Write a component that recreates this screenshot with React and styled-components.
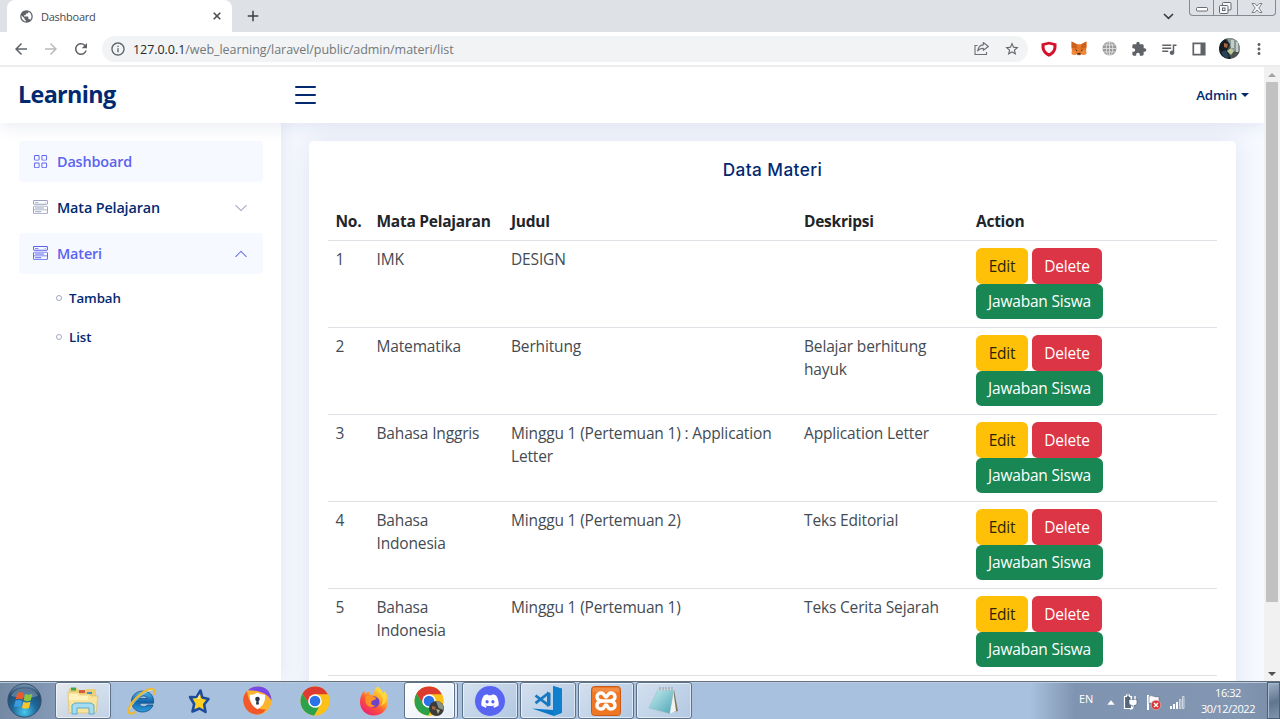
import React from "react";
import styled, { createGlobalStyle, css } from "styled-components";
import {
  MdArrowBack, MdArrowForward, MdRefresh, MdInfoOutline, MdPublic, MdAdd,
  MdStarBorder, MdExtension, MdQueueMusic, MdMoreVert,
} from "react-icons/md";
import { BsGrid, BsMenuButtonWide, BsChevronDown, BsChevronUp } from "react-icons/bs";
import { FaDiscord } from "react-icons/fa";

const GlobalStyle = createGlobalStyle`
  * { box-sizing: border-box; }
  body { margin: 0; overflow: hidden; font-family: "Open Sans", "Noto Sans", sans-serif; }
  svg { display: block; flex: none; }
`;

const Screen = styled.div`
  width: 1280px;
  height: 719px;
  display: flex;
  flex-direction: column;
  overflow: hidden;
  background: #fff;
`;

/* ---------- browser ---------- */

const TabStrip = styled.div`
  height: 32px;
  flex: none;
  display: flex;
  align-items: stretch;
  background: #dee1e6;
  padding-left: 7px;
`;

const Tab = styled.div`
  width: 225px;
  display: flex;
  align-items: center;
  padding: 0 11px 0 12px;
  gap: 7px;
  background: #fff;
  border-radius: 8px 8px 0 0;
  color: #5f6368;
`;

const TabTitle = styled.span`
  flex: 1;
  font-size: 11px;
  letter-spacing: -0.25px;
  color: #45494d;
`;

const NewTab = styled.div`
  display: flex;
  align-items: center;
  padding-left: 12px;
  color: #3c4043;
  flex: 1;
`;

const TabSearch = styled.div`
  display: flex;
  align-items: center;
  margin-right: 15px;
  color: #3c4043;
`;

const WindowButtons = styled.div`
  display: flex;
  width: 87px;
  height: 16px;
  margin-right: 4px;
  border: 1px solid #858a91;
  border-top: 0;
  border-radius: 0 0 4px 4px;
`;

const WindowButton = styled.div`
  width: ${(p) => p.$w}px;
  display: flex;
  align-items: center;
  justify-content: center;
  padding-top: ${(p) => p.$drop || 0}px;
  border-left: ${(p) => (p.$first ? "0" : "1px solid #858a91")};
`;

const Toolbar = styled.div`
  height: 35px;
  flex: none;
  display: flex;
  align-items: center;
  padding: 0 6px 0 12px;
  border-bottom: 2px solid #ebecee;
  color: #5f6368;
`;

const NavButtons = styled.div`
  display: flex;
  gap: 12px;
  width: 90px;
`;

const AddressBar = styled.div`
  flex: 1;
  height: 26px;
  border-radius: 13px;
  background: #f1f3f4;
  display: flex;
  align-items: center;
  padding: 0 8px;
`;

const Url = styled.span`
  flex: 1;
  margin-left: 7px;
  padding-top: 1px;
  font-size: 12.5px;
  letter-spacing: -0.05px;
  color: #74787c;
  span { color: #27292c; }
`;

const AddressActions = styled.div`
  display: flex;
  gap: 14px;
`;

const Extensions = styled.div`
  display: grid;
  grid-template-columns: repeat(8, 30px);
  place-items: center;
  margin-left: 6px;
`;

const Viewport = styled.div`
  height: 614px;
  flex: none;
  display: flex;
  overflow: hidden;
`;

const Scrollbar = styled.div`
  width: 16px;
  display: flex;
  flex-direction: column;
  align-items: center;
  justify-content: space-between;
  background: #f1f1f1;
  padding: 6px 0 5px;
`;

const Thumb = styled.div`
  width: 12px;
  height: 520px;
  margin: 0 0 auto;
  background: #c1c1c1;
`;

const ScrollArrow = styled.div`
  border: 4px solid transparent;
  ${(p) => p.$up
    ? css`border-top: 0; border-bottom-color: #a3a3a3; margin-bottom: 5px;`
    : css`border-bottom: 0; border-top-color: #505050;`}
`;

/* ---------- page ---------- */

const Page = styled.div`
  flex: 1;
  display: flex;
  flex-direction: column;
  background: #f6f9ff;
  overflow: hidden;
`;

const Header = styled.header`
  position: relative;
  z-index: 2;
  height: 56px;
  flex: none;
  display: flex;
  align-items: center;
  padding: 0 15px 0 18px;
  background: #fff;
  box-shadow: 0 2px 19px rgba(1, 41, 112, 0.1);
  color: #012970;
`;

const Brand = styled.div`
  width: 277px;
  padding-bottom: 2px;
  font: 700 23.4px/30px "Open Sans", sans-serif;
  letter-spacing: -0.68px;
`;

const Burger = styled.div`
  width: 21px;
  height: 18px;
  margin-bottom: 1px;
  display: flex;
  flex-direction: column;
  justify-content: space-between;
  span { height: 2px; border-radius: 1px; background: #012970; }
`;

const Account = styled.div`
  margin-left: auto;
  display: flex;
  align-items: center;
  gap: 4px;
  font-size: 13.3px;
  letter-spacing: -0.25px;
  font-weight: 600;
`;

const Caret = styled.i`
  border: 4px solid transparent;
  border-bottom: 0;
  border-top-color: #012970;
`;

const Body = styled.div`
  flex: 1;
  display: flex;
  min-height: 0;
`;

const Sidebar = styled.aside`
  width: 281px;
  flex: none;
  padding: 18px 18px 0 19px;
  background: #fff;
  box-shadow: 0 0 19px rgba(1, 41, 112, 0.1);
`;

const NavItem = styled.div`
  height: 41px;
  margin-bottom: 5px;
  display: flex;
  align-items: center;
  padding: 0 15px 0 14px;
  border-radius: 4px;
  font-size: 14.4px;
  letter-spacing: -0.14px;
  font-weight: 600;
  color: ${(p) => (p.$active ? "#5b62f0" : "#012970")};
  background: ${(p) => (p.$active ? "#f6f9ff" : "#fff")};
  & > svg { color: ${(p) => (p.$active ? "#5b62f0" : "#98a2c0")}; }
`;

const NavLabel = styled.span`
  flex: 1;
  margin-left: 9px;
`;

const SubItem = styled.div`
  height: 38.4px;
  display: flex;
  align-items: center;
  padding-left: 37px;
  gap: 7px;
  font-size: 13.3px;
  letter-spacing: -0.08px;
  font-weight: 600;
  color: #012970;
`;

const Bullet = styled.i`
  width: 6px;
  height: 6px;
  border: 1px solid #a0a9c4;
  border-radius: 50%;
`;

const Main = styled.main`
  flex: 1;
  padding: 18px 28px 0;
`;

const Card = styled.section`
  height: 620px;
  padding: 0 19px;
  background: #fff;
  border-radius: 5px;
  box-shadow: 0 0 28px rgba(1, 41, 112, 0.1);
`;

const CardTitle = styled.h5`
  margin: 0;
  padding: 19px 0 19px;
  text-align: center;
  font: 450 17.2px/20px Inter, sans-serif;
  letter-spacing: 0.42px;
  color: #012970;
`;

const Table = styled.table`
  width: 889px;
  table-layout: fixed;
  border-collapse: collapse;
  font-size: 15.5px;
  letter-spacing: -0.16px;
  line-height: 22.5px;
  color: #444b52;
`;

const Th = styled.th`
  width: ${(p) => p.$w}px;
  height: 41px;
  padding: 3px 7.5px 0;
  text-align: left;
  font-weight: 700;
  letter-spacing: -0.26px;
  color: #212529;
  border-bottom: 1px solid #dee2e6;
`;

const Td = styled.td`
  height: 87px;
  padding: 7.5px 7.5px 7px;
  vertical-align: top;
  border-bottom: 1px solid #dee2e6;
`;

const Actions = styled.div`
  width: 150px;
  display: flex;
  flex-wrap: wrap;
  column-gap: 4px;
`;

const tones = {
  warning: { bg: "#ffc107", fg: "#2b2406", w: 52 },
  danger: { bg: "#dc3545", fg: "#fff", w: 70 },
  success: { bg: "#198754", fg: "#fff", w: 127 },
};

const Button = styled.button`
  width: ${(p) => tones[p.$tone].w}px;
  height: 35.6px;
  padding: 0;
  border: 0;
  border-radius: 5.6px;
  font: 400 15.5px/22px "Open Sans", sans-serif;
  letter-spacing: -0.2px;
  white-space: nowrap;
  color: ${(p) => tones[p.$tone].fg};
  background: ${(p) => tones[p.$tone].bg};
`;

/* ---------- taskbar ---------- */

const Taskbar = styled.div`
  height: 38px;
  flex: none;
  display: flex;
  align-items: stretch;
  border-top: 1px solid #64717f;
  box-shadow: inset 0 1px 0 #b9cadc;
  background: linear-gradient(90deg, #7589a3 0, #8298b4 50px, #a6c0de 115px, #a8c1df 1030px, #7f94b0 1075px, #8296b2 1240px, #798da8 1280px);
`;

const StartSlot = styled.div`
  width: 55px;
  display: flex;
  align-items: center;
  padding-left: 7px;
`;

const TaskSlot = styled.div`
  width: 56.1px;
  margin-right: 2px;
  display: flex;
  align-items: center;
  justify-content: center;
  ${(p) => p.$open && css`
    border: 1px solid #5d7188;
    border-radius: 3px;
    box-shadow: inset 0 0 0 1px rgba(255, 255, 255, 0.55);
    background: linear-gradient(135deg, rgba(255, 255, 255, ${p.$bright ? 0.8 : 0.5}), rgba(255, 255, 255, ${p.$bright ? 0.35 : 0.12}));
  `}
  ${(p) => p.$stacked && css`
    width: 51px;
    margin-right: 7px;
    background: linear-gradient(135deg, #fff, #e3edf8);
    box-shadow: inset 0 0 0 1px #fff, 3px 0 0 -1px #dbe7f4, 4px 0 0 -1px #5d7188;
  `}
`;

const Tray = styled.div`
  margin-left: auto;
  display: flex;
  align-items: center;
  color: #fff;
  font-size: 11px;
`;

const Lang = styled.span`
  width: 28px;
  margin-bottom: 5px;
  font-size: 11px;
  letter-spacing: -0.2px;
`;

const TrayIcons = styled.div`
  display: flex;
  align-items: center;
  gap: 8px;
  padding-top: 3px;
`;

const Clock = styled.div`
  width: 58px;
  margin: 0 10px 0 14px;
  text-align: center;
  font-size: 11px;
  line-height: 16px;
  letter-spacing: -0.42px;
  white-space: nowrap;
`;

const ShowDesktop = styled.div`
  align-self: stretch;
  width: 13px;
  border: 1px solid #4b5f78;
  box-shadow: inset 1px 1px 0 #a9b9cc;
  background: linear-gradient(160deg, #9db0c6, #60758f 55%, #8094ac);
`;

/* ---------- drawings ---------- */

const TabClose = () => (
  <svg width="8" height="8" viewBox="0 0 8 8"><path d="m.7.700 6.600 6.600M7.300.700.700 7.300" stroke="#4a4e52" strokeWidth="1.600" /></svg>
);

const ShareIcon = () => (
  <svg width="16" height="15" viewBox="0 0 16 15" fill="none" stroke="#6b6f74" strokeWidth="1.1">
    <path d="M3.500 4.500H1v9h11.500V11" />
    <path d="M9.300 1.500 14.400 5.500 9.300 9.300V7.200C6.500 7.200 4.900 8 3.700 10 4.100 6.500 5.800 4.200 9.300 3.900Z" strokeLinejoin="round" />
  </svg>
);

const Shield = () => (
  <svg width="16" height="16" viewBox="0 0 16 16">
    <path d="M8 .7 15.500 2.500v3.200c0 4.500-3 8-7.500 10-4.500-2-7.500-5.500-7.500-10V2.500z" fill="#d6122b" />
    <path d="M8 3.600 12.400 4.600v1.600C12.400 8.900 10.600 11 8 12.300 5.400 11 3.600 8.900 3.600 6.200V4.600z" fill="#fff" />
  </svg>
);

const Fox = () => (
  <svg width="16" height="15" viewBox="0 0 16 15">
    <path d="m.6.500 5.200 2.800h4.400L15.400.500l.3 5.200-.6 3.600.4 3.500-3.200 1.200-2.100-.7-1 .9H6.800l-1-.9-2.100.7-3.200-1.200.4-3.500L.3 5.700z" fill="#e8792a" />
    <path d="m.6.500 5.200 2.800.5 4.400L.9 6.800zM15.400.500l-5.200 2.800-.5 4.400 5.400-.9z" fill="#cf5f1c" />
    <path d="m3.600 8.300 2.500.6-.2 1.300zM12.400 8.300l-2.500.6.2 1.300zM6.600 12h2.800l.3 1.400H6.300z" fill="#33302d" />
    <path d="m1 9.300 3.200.1 1.400 3.800-4.600.3zM15 9.300l-3.200.1-1.400 3.800 4.600.3z" fill="#f08a3a" />
  </svg>
);

const GreyGlobe = () => (
  <svg width="15" height="15" viewBox="0 0 15 15">
    <circle cx="7.500" cy="7.500" r="7" fill="#9a9a9a" />
    <g fill="none" stroke="#e9e9e9" strokeWidth=".8">
      <ellipse cx="7.500" cy="7.500" rx="3.300" ry="7" />
      <path d="M7.500.500v14M.500 7.500h14M1.500 4h12M1.500 11h12" />
    </g>
  </svg>
);

const SidePanel = () => (
  <svg width="14" height="14" viewBox="0 0 14 14">
    <path d="M1.300 1.300h11.400v11.400H1.300z" fill="#fff" stroke="#5f6368" strokeWidth="1.700" />
    <path d="M8.500 1H13v12H8.500z" fill="#5f6368" />
  </svg>
);

const Portrait = ({ size = 21 }) => (
  <svg width={size} height={size} viewBox="0 0 21 21">
    <clipPath id="portrait"><circle cx="10.500" cy="10.500" r="10.500" /></clipPath>
    <g clipPath="url(#portrait)">
      <path d="M0 0h21v21H0z" fill="#4a5350" />
      <path d="M8 0h13v14L13 13z" fill="#899894" />
      <path d="M12 2h3v8h-3zM17 4h2v10h-2z" fill="#c3cdca" />
      <path d="M0 6 6 1l5 5-3 6 4 9H0z" fill="#151c24" />
      <path d="m5 5 4 1-1 4-3-1z" fill="#a8643c" />
      <path d="m8 13 4-3 3 3-3 4z" fill="#bfc79b" />
      <path d="m2 14 5-2 3 7-4 2z" fill="#294459" />
    </g>
  </svg>
);

const MinimizeIcon = () => (
  <svg width="12" height="5" viewBox="0 0 12 5"><rect x=".5" y=".5" width="11" height="3.500" rx="1" fill="#fff" stroke="#686d74" /></svg>
);

const RestoreIcon = () => (
  <svg width="13" height="12" viewBox="0 0 13 12" fill="#f8f9fa" stroke="#62676e">
    <rect x="3.500" y=".5" width="8.500" height="7.500" rx="1" />
    <rect x=".5" y="3.500" width="8.500" height="8" rx="1" />
    <rect x="3.500" y="6" width="2.500" height="2.500" />
  </svg>
);

const CloseIcon = () => (
  <svg width="12" height="10" viewBox="0 0 12 10">
    <path d="M1 .5h2.800L6 3 8.200.5H11L7.800 5 11 9.500H8.200L6 7 3.800 9.500H1L4.200 5z" fill="#f4f5f7" stroke="#74787f" strokeWidth=".9" />
  </svg>
);

const StartOrb = () => (
  <svg width="35" height="35" viewBox="0 0 35 35">
    <defs>
      <radialGradient id="orb" cx=".5" cy=".85" r=".9">
        <stop offset="0" stopColor="#4bc8ee" /><stop offset=".4" stopColor="#1d6a9c" /><stop offset=".75" stopColor="#23496f" /><stop offset="1" stopColor="#a9c2d8" />
      </radialGradient>
    </defs>
    <circle cx="17.500" cy="17.500" r="16.600" fill="url(#orb)" stroke="#31506d" />
    <path d="M4 13C7 3 28 3 31 13 23 16 13 15 4 13z" fill="#fff" opacity=".25" />
    <path d="M10.300 10c2.500-1.300 4.600-1 6.600.3l-1.500 6.500c-2.300-1.300-4.500-1.400-6.700-.4z" fill="#ea5b2a" />
    <path d="M18.100 10.900c2.400 1.200 4.900 1 7.300-.1l-1.600 6.500c-2.400 1.200-4.800 1.100-7.100-.1z" fill="#8cc63e" />
    <path d="M8.400 17.700c2.300-1 4.400-.9 6.700.4l-1.500 6.300c-2.200-1.200-4.400-1.200-6.700-.3z" fill="#3d9be0" />
    <path d="M16.400 18.700c2.300 1.200 4.700 1.200 7.100.1L22 25.100c-2.500 1.100-4.800.9-7.100-.3z" fill="#fbc62b" />
  </svg>
);

const Explorer = () => (
  <svg width="32" height="30" viewBox="0 0 32 30">
    <path d="M2 4V2h8l2 2h7V3h10v23H2z" fill="#edcf77" />
    <path d="M4 1.500h5v3H4z" fill="#36a852" /><path d="M12 4h6v3h-6z" fill="#d75d3d" /><path d="M20 6h5v2h-5z" fill="#3a8dc9" />
    <path d="M1 6h10l2 2h9l2 2h7l-2 17H2z" fill="#f8e49a" stroke="#d9b964" strokeWidth=".6" />
    <path d="M2 8h8l2 2h9v4H2z" fill="#fff2bd" />
    <path d="M5 28v-9l3-2h16l3 2v9h-5v-6H10v6z" fill="#a5dcf0" stroke="#4fa6cd" strokeWidth=".9" />
  </svg>
);

const InternetExplorer = () => (
  <svg width="29" height="29" viewBox="0 0 29 29" fill="none">
    <defs><linearGradient id="ie" x2="0" y2="1"><stop stopColor="#55b9ed" /><stop offset=".5" stopColor="#1265ad" /><stop offset="1" stopColor="#2d9ee0" /></linearGradient></defs>
    <path d="M26.500 17.200H12.500c.5 4.300 6 4.600 7.700 1.800h5.800C22.500 29.500 4.500 28 4.500 15.500S23.500 1.500 26.300 12.500c.4 1.600.3 3 .2 4.700zM12.500 12.600h7.600c-.6-3.600-7-3.600-7.600 0z" fill="url(#ie)" stroke="#134b80" strokeWidth=".8" />
    <path d="M27 8c1-4-.5-6-4-5C15 5 2 17 1.500 25c0 3 3 3 6 1.500" stroke="#f0b92c" strokeWidth="2.200" strokeLinecap="round" />
    <path d="M25.500 4C20 3.500 7 14 3 23" stroke="#fff0a0" strokeWidth=".7" />
  </svg>
);

const StarApp = () => (
  <svg width="24" height="26" viewBox="0 0 24 26">
    <path d="m13.500 2.500 1.800 7 6.200 1.500-4.300 5.500 1.300 7.500-6-3.500-7 3 1.700-7.500L3 9l6.500.2z" fill="#ffcf21" stroke="#1c4c9b" strokeWidth="2.600" strokeLinejoin="round" />
    <path d="m12.500 6 .5 5-7-.5 4.500-.5z" fill="#fff08c" />
  </svg>
);

const SecureBrowser = () => (
  <svg width="29" height="29" viewBox="0 0 29 29">
    <circle cx="14.500" cy="14.500" r="14" fill="#fbb42e" />
    <path d="M4 5A14 14 0 0 0 13 28.400c5 0 8-2 10-5C13 24 5 17 4 5z" fill="#f2582a" />
    <path d="M5 4.300C12-2.500 28-1 28.500 14.500 25 8 16 4 5 4.300z" fill="#7847e8" />
    <path d="M14.500 6.500c2.500 1.800 5 2.300 7.500 2.200.7 6-1.600 11.400-7.500 14.500C8.600 20.100 6.300 14.700 7 8.700c2.500.1 5-.4 7.500-2.200z" fill="#fff" />
    <circle cx="14.500" cy="13" r="2.300" fill="#27334b" /><path d="M13.600 14h1.800l.6 4.500h-3z" fill="#27334b" />
  </svg>
);

const Chrome = ({ profile }) => (
  <svg width="30" height="30" viewBox="0 0 30 30">
    <circle cx="15" cy="15" r="14.500" fill="#fbc116" />
    <path d="M15 8.500h12.950A14.500 14.500 0 0 0 2.440 7.750L9.400 18.200z" fill="#de3b30" />
    <path d="M2.440 7.750 9.370 18.250 15 21.500h5.600L14.200 29.480A14.500 14.500 0 0 1 2.440 7.750z" fill="#2ba14b" />
    <path d="M20.630 18.250 14.200 29.480A14.500 14.500 0 0 0 27.950 8.500H15z" fill="#fbc116" />
    <circle cx="15" cy="15" r="6.800" fill="#fff" /><circle cx="15" cy="15" r="5.300" fill="#2b72e6" />
    {profile && (
      <g>
        <circle cx="22.500" cy="22.500" r="7.500" fill="#393c3b" />
        <path d="M22 15.100a7.500 7.500 0 0 1 7.500 9l-5-2z" fill="#8b9389" />
        <path d="m18 20 4 1-1 3-3-1z" fill="#a5663f" /><path d="m22 23 4 1-2 4z" fill="#b9af82" />
      </g>
    )}
  </svg>
);

const Firefox = () => (
  <svg width="30" height="30" viewBox="0 0 30 30">
    <defs>
      <linearGradient id="fx" x1=".85" y1=".05" x2=".2" y2=".95"><stop stopColor="#fff04a" /><stop offset=".35" stopColor="#ffac28" /><stop offset=".65" stopColor="#ff503c" /><stop offset="1" stopColor="#ec2172" /></linearGradient>
    </defs>
    <path d="M18.500.5c4.500 3 5.500 6 5.700 7l1.200-2.300c3.600 4 4.200 8.600 3.400 12.800C27.500 25 21.500 29.500 15 29.500 6.500 29.500 1 23.500 1 16c0-4.500 1.500-8.500 4.300-11.500L6 8l4-2.500.6 3.300c1-.3 2.700-.2 4.400.2-.4-4 1.200-7 3.500-8.500z" fill="url(#fx)" />
    <circle cx="14.800" cy="16" r="5.700" fill="#7042c7" />
    <path d="M6.500 10c3-1.500 5.500-1 8 .5l3 1.800c-1 1.800-4.300 1.500-5.200 3.700-.8 2 1.200 4 4.200 3.400-4 3.600-10 .600-10-4.400z" fill="#ff9226" />
    <path d="M18 2c1 5 6 6.500 6 12 0 3-1.500 5-3 6 6-1.500 7.500-7.500 4-13l-.8 2C23 5 20 3 18 2z" fill="#ffd83d" />
  </svg>
);

const Discord = () => (
  <svg width="30" height="30" viewBox="0 0 30 30">
    <circle cx="15" cy="15" r="15" fill="#5865f2" />
    <FaDiscord x="5.500" y="5.500" width="19" height="19" size={19} color="#fff" />
  </svg>
);

const VsCode = () => (
  <svg width="31" height="30" viewBox="0 0 31 30">
    <path d="M0 22.500 21 24V0l9 2.800v24L22 30z" fill="#0b78c6" />
    <path d="M21 0 30 2.800v24L21 29z" fill="#0f7fce" />
    <path d="M3.500 9.500 16 18.800M3.500 17.200 16 7.500" stroke="#1679c2" strokeWidth="2.800" fill="none" />
    <path d="M15 5.500 18.500 7v12.500L15 21z" fill="#1679c2" />
  </svg>
);

const Xampp = () => (
  <svg width="30" height="30" viewBox="0 0 30 30">
    <rect x=".5" y=".5" width="29" height="29" rx="3" fill="#ef7622" stroke="#c7591b" />
    <path d="M2 2h26v4H2z" fill="#f6a166" opacity=".5" />
    <path d="M11 15h8M11 15c-7-1-6-8-1-8 4 0 3 4 5 4s1-4 5-4c5 0 6 7-1 8 7 1 6 8 1 8-4 0-3-4-5-4s-1 4-5 4c-5 0-6-7 1-8z" fill="none" stroke="#fff" strokeWidth="3.400" strokeLinejoin="round" />
  </svg>
);

const Notepad = () => (
  <svg width="31" height="28" viewBox="0 0 31 28">
    <defs><linearGradient id="note" x2="1" y2="1"><stop stopColor="#c8eef1" /><stop offset="1" stopColor="#4ea5b6" /></linearGradient></defs>
    <path d="M26 2.500 30 24l-6 1z" fill="#85775e" /><path d="m25 2 3 22-6 2.500z" fill="#f1f3ef" />
    <path d="M10.500 2H26l-4.500 24.500L1 21z" fill="url(#note)" stroke="#8bbcc3" strokeWidth=".5" />
    <path d="M10.500 1.500H26v1.800H10z" fill="#d9dfdf" /><path d="M12 0v3.500m3-3.500v3.500m3-3.500v3.500m3-3.500v3.500m3-3.500v3.500" stroke="#74828a" strokeWidth=".7" />
  </svg>
);

const UpTriangle = () => <svg width="8" height="5" viewBox="0 0 8 5"><path d="m4 .3 3.700 4.400H.3z" fill="#fff" /></svg>;

const Power = () => (
  <svg width="15" height="16" viewBox="0 0 15 16">
    <path d="M3.500 2.500V1h3v1.500h2v12h-7v-12z" fill="#55677d" stroke="#fff" strokeWidth="1.200" />
    <path d="M6 5.500h8v3.300c0 1.700-1.200 2.700-3 2.700v1.500H9.300v-1.500C7.500 11.500 6 10.500 6 8.800z" fill="#fff" stroke="#43556a" strokeWidth=".6" />
    <path d="M10 12.500c0 2-1 2.500-3 2.500M8.200 5.500V2M12 5.500V2" fill="none" stroke="#fff" strokeWidth="1.400" />
  </svg>
);

const Flag = () => (
  <svg width="16" height="17" viewBox="0 0 16 17">
    <path d="M2 1v15" stroke="#fff" strokeWidth="2" /><path d="M3 2c4-1.500 5 2 10 .5v7C9 11 7 8 3 9.500z" fill="#f8fafc" stroke="#59697b" strokeWidth=".6" />
    <circle cx="10" cy="11" r="4.800" fill="#da3436" stroke="#f1c2c2" strokeWidth=".6" /><path d="m8 9 4 4m0-4-4 4" stroke="#fff" strokeWidth="1.500" />
  </svg>
);

const Signal = () => (
  <svg width="15" height="13" viewBox="0 0 15 13">
    <path d="M0 10h2v3H0zM3 8h2v5H3zM6 6h2v7H6z" fill="#fff" />
    <path d="M9.500 3.500h1.500v9H9.500zM12.500.5H14v12h-1.500z" fill="#8fa0b5" stroke="#dfe6ee" strokeWidth=".8" />
  </svg>
);

/* ---------- data ---------- */

const rows = [
  ["1", "IMK", "DESIGN", ""],
  ["2", "Matematika", "Berhitung", "Belajar berhitung hayuk"],
  ["3", "Bahasa Inggris", "Minggu 1 (Pertemuan 1) : Application Letter", "Application Letter"],
  ["4", "Bahasa Indonesia", "Minggu 1 (Pertemuan 2)", "Teks Editorial"],
  ["5", "Bahasa Indonesia", "Minggu 1 (Pertemuan 1)", "Teks Cerita Sejarah"],
];

const columns = [["No.", 41], ["Mata Pelajaran", 134.5], ["Judul", 293], ["Deskripsi", 172], ["Action", 248.5]];

const tasks = [
  { icon: <Explorer />, open: true, bright: true },
  { icon: <InternetExplorer /> },
  { icon: <StarApp /> },
  { icon: <SecureBrowser /> },
  { icon: <Chrome /> },
  { icon: <Firefox /> },
  { icon: <Chrome profile />, open: true, bright: true, stacked: true },
  { icon: <Discord />, open: true },
  { icon: <VsCode />, open: true },
  { icon: <Xampp />, open: true },
  { icon: <Notepad />, open: true },
];

export default function App() {
  return (
    <Screen>
      <GlobalStyle />
      <TabStrip>
        <Tab>
          <MdPublic size={15} />
          <TabTitle>Dashboard</TabTitle>
          <TabClose />
        </Tab>
        <NewTab><MdAdd size={18} /></NewTab>
        <TabSearch>
          <svg width="11" height="7" viewBox="0 0 11 7"><path d="m1 1 4.500 4.300L10 1" fill="none" stroke="currentColor" strokeWidth="1.700" /></svg>
        </TabSearch>
        <WindowButtons>
          <WindowButton $w={23} $drop={4} $first><MinimizeIcon /></WindowButton>
          <WindowButton $w={24}><RestoreIcon /></WindowButton>
          <WindowButton $w={38}><CloseIcon /></WindowButton>
        </WindowButtons>
      </TabStrip>
      <Toolbar>
        <NavButtons>
          <MdArrowBack size={18} />
          <MdArrowForward size={18} color="#b9bbbe" />
          <MdRefresh size={18} />
        </NavButtons>
        <AddressBar>
          <MdInfoOutline size={16} />
          <Url><span>127.0.0.1</span>/web_learning/laravel/public/admin/materi/list</Url>
          <AddressActions>
            <ShareIcon />
            <MdStarBorder size={16} />
          </AddressActions>
        </AddressBar>
        <Extensions>
          <Shield />
          <Fox />
          <GreyGlobe />
          <MdExtension size={16} />
          <MdQueueMusic size={18} />
          <SidePanel />
          <Portrait />
          <MdMoreVert size={18} />
        </Extensions>
      </Toolbar>

      <Viewport>
        <Page>
          <Header>
            <Brand>Learning</Brand>
            <Burger><span /><span /><span /></Burger>
            <Account>Admin <Caret /></Account>
          </Header>
          <Body>
            <Sidebar>
              <NavItem $active><BsGrid size={15} /><NavLabel>Dashboard</NavLabel></NavItem>
              <NavItem><BsMenuButtonWide size={15} /><NavLabel>Mata Pelajaran</NavLabel><BsChevronDown size={14} /></NavItem>
              <NavItem $active><BsMenuButtonWide size={15} /><NavLabel>Materi</NavLabel><BsChevronUp size={14} /></NavItem>
              <SubItem><Bullet />Tambah</SubItem>
              <SubItem><Bullet />List</SubItem>
            </Sidebar>
            <Main>
              <Card>
                <CardTitle>Data Materi</CardTitle>
                <Table>
                  <thead>
                    <tr>{columns.map(([label, w]) => <Th key={label} $w={w}>{label}</Th>)}</tr>
                  </thead>
                  <tbody>
                    {rows.map((row) => (
                      <tr key={row[0]}>
                        {row.map((cell, i) => <Td key={i}>{cell}</Td>)}
                        <Td>
                          <Actions>
                            <Button $tone="warning">Edit</Button>
                            <Button $tone="danger">Delete</Button>
                            <Button $tone="success">Jawaban Siswa</Button>
                          </Actions>
                        </Td>
                      </tr>
                    ))}
                  </tbody>
                </Table>
              </Card>
            </Main>
          </Body>
        </Page>
        <Scrollbar>
          <ScrollArrow $up />
          <Thumb />
          <ScrollArrow />
        </Scrollbar>
      </Viewport>

      <Taskbar>
        <StartSlot><StartOrb /></StartSlot>
        {tasks.map((t, i) => (
          <TaskSlot key={i} $open={t.open} $bright={t.bright} $stacked={t.stacked}>{t.icon}</TaskSlot>
        ))}
        <Tray>
          <Lang>EN</Lang>
          <TrayIcons><UpTriangle /><Power /><Flag /><Signal /></TrayIcons>
          <Clock>16:32<br />30/12/2022</Clock>
          <ShowDesktop />
        </Tray>
      </Taskbar>
    </Screen>
  );
}
